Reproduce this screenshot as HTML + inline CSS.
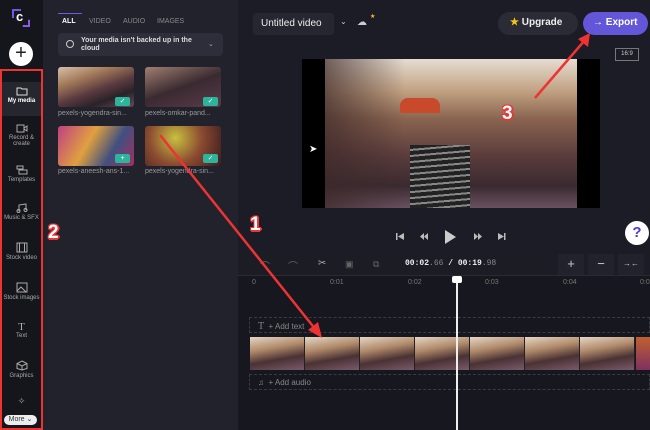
<!DOCTYPE html>
<html><head><style>
*{margin:0;padding:0;box-sizing:border-box}
body{width:650px;height:430px;overflow:hidden;background:#1c1c26;font-family:"Liberation Sans",sans-serif;color:#ddd;position:relative}
.a{position:absolute}
.photo{background:linear-gradient(160deg,#d8c0a8 0%,#a07858 30%,#5a3a40 55%,#2a2228 75%,#6a4a5a 100%)}
.side{left:0;top:0;width:43px;height:430px;background:#15151c}
.nav{left:0;width:43px;text-align:center;font-size:6px;color:#aaa}
.nav svg{display:block;margin:0 auto 2px}
.panel{left:43px;top:0;width:195px;height:430px;background:#22222c}
.thumb{width:76px;height:40px;border-radius:3px}
.cap{font-size:7px;color:#999}
.chk{width:15px;height:9px;background:#2cb59b;border-radius:2px;color:#fff;font-size:7px;text-align:center;line-height:9px}
.frame{width:55px;height:33px;top:0;background:linear-gradient(170deg,#e6d6c6 0%,#b08a6a 35%,#4a3234 65%,#7a5a6a 100%);border-right:1px solid #222}
.tick{font-size:7px;color:#777;top:279px}
.red{border:2px solid #e33}
.num{font-weight:bold;color:#fff;font-size:19px;text-shadow:-1px -1px 0 #e33,1px -1px 0 #e33,-1px 1px 0 #e33,1px 1px 0 #e33,0 2px 0 #e33,2px 0 0 #e33}
</style></head><body>
<div class="a side"></div>
<div class="a" style="left:12px;top:9px;width:18px;height:18px;border-top:2px solid #6b5ce7;border-left:2px solid #6b5ce7;clip-path:polygon(0 0,50% 0,50% 50%,0 50%)"></div>
<div class="a" style="left:12px;top:9px;width:18px;height:18px;border-bottom:2px solid #8a5be7;border-right:2px solid #8a5be7;clip-path:polygon(60% 60%,100% 60%,100% 100%,60% 100%)"></div>
<div class="a" style="left:16px;top:9px;font-size:13px;font-weight:bold;color:#fff">c</div>
<div class="a" style="left:9px;top:42px;width:24px;height:24px;border-radius:50%;background:#fff;color:#222;font-size:20px;text-align:center;line-height:23px">+</div>
<div class="a" style="left:0;top:82px;width:42px;height:34px;background:#26262f"></div>
<div class="a nav" style="top:86px;color:#fff;font-weight:bold"><svg width="12" height="10"><path d="M1 2h4l1 1h5v6H1z" fill="none" stroke="#ddd"/></svg>My media</div>
<div class="a nav" style="top:124px"><svg width="12" height="9"><rect x="1" y="1" width="7" height="7" fill="none" stroke="#aaa"/><path d="M8 4l3-2v5l-3-2" fill="none" stroke="#aaa"/></svg>Record &amp;<br>create</div>
<div class="a nav" style="top:165px"><svg width="12" height="10"><rect x="1" y="1" width="6" height="3" fill="none" stroke="#aaa"/><rect x="3" y="5" width="8" height="4" fill="none" stroke="#aaa"/></svg>Templates</div>
<div class="a nav" style="top:203px"><svg width="12" height="10"><path d="M3 8V2l7-1v6" fill="none" stroke="#aaa"/><circle cx="2.5" cy="8" r="1.5" fill="none" stroke="#aaa"/><circle cx="9.5" cy="7" r="1.5" fill="none" stroke="#aaa"/></svg>Music &amp; SFX</div>
<div class="a nav" style="top:242px"><svg width="12" height="11"><rect x="1" y="1" width="10" height="9" fill="none" stroke="#aaa"/><path d="M3.5 1v9M8.5 1v9" stroke="#aaa"/></svg>Stock video</div>
<div class="a nav" style="top:282px"><svg width="12" height="11"><rect x="1" y="1" width="10" height="9" fill="none" stroke="#aaa"/><path d="M1 9l4-4 5 5" fill="none" stroke="#aaa"/></svg>Stock images</div>
<div class="a nav" style="top:321px"><div style="font-family:'Liberation Serif',serif;font-size:11px;color:#aaa">T</div>Text</div>
<div class="a nav" style="top:360px"><svg width="12" height="11"><path d="M6 1l5 2.5v5L6 10 1 8.5v-5z M1 3.5l5 2.5 5-2.5M6 6v4" fill="none" stroke="#aaa"/></svg>Graphics</div>
<div class="a nav" style="top:396px;font-size:9px">✧</div>
<div class="a" style="left:4px;top:415px;width:33px;height:10px;background:#eee;border-radius:5px;color:#333;font-size:7px;text-align:center;line-height:10px">More ⌄</div>
<div class="a red" style="left:0;top:69px;width:43px;height:361px"></div>

<div class="a panel"></div>
<div class="a num" style="left:48px;top:222px">2</div>
<div class="a" style="left:58px;top:13px;width:24px;height:1px;background:#6b5ce7"></div>
<div class="a" style="left:62px;top:18px;font-size:7px;font-weight:bold;color:#fff">ALL</div>
<div class="a" style="left:89px;top:18px;font-size:7px;color:#888">VIDEO</div>
<div class="a" style="left:123px;top:18px;font-size:7px;color:#888">AUDIO</div>
<div class="a" style="left:157px;top:18px;font-size:7px;color:#888">IMAGES</div>
<div class="a" style="left:58px;top:33px;width:165px;height:23px;background:#2e2e3a;border-radius:4px"></div>
<div class="a" style="left:66px;top:40px;width:8px;height:8px;border:1px solid #ccc;border-radius:50%"></div>
<div class="a" style="left:81px;top:37px;font-size:7px;font-weight:bold;color:#ddd;line-height:8px">Your media isn't backed up in the<br>cloud</div>
<div class="a" style="left:208px;top:40px;font-size:7px;color:#aaa">⌄</div>

<div class="a thumb photo" style="left:58px;top:67px"></div>
<div class="a chk" style="left:115px;top:97px">✓</div>
<div class="a cap" style="left:58px;top:110px">pexels-yogendra-sin...</div>
<div class="a thumb" style="left:145px;top:67px;background:linear-gradient(160deg,#a08070,#3a2a30 50%,#5a3a4a)"></div>
<div class="a chk" style="left:203px;top:97px">✓</div>
<div class="a cap" style="left:145px;top:110px">pexels-omkar-pand...</div>
<div class="a thumb" style="left:58px;top:126px;background:linear-gradient(120deg,#c04080,#e0a040 40%,#405080 70%,#a03060)"></div>
<div class="a chk" style="left:115px;top:154px">+</div>
<div class="a cap" style="left:58px;top:168px">pexels-aneesh-ans-1...</div>
<div class="a thumb" style="left:145px;top:126px;background:radial-gradient(circle at 40% 30%,#c8c040,#8a4a30 50%,#3a1a20)"></div>
<div class="a chk" style="left:203px;top:154px">✓</div>
<div class="a cap" style="left:145px;top:168px">pexels-yogendra-sin...</div>

<div class="a" style="left:253px;top:13px;width:81px;height:22px;background:#262630;border-radius:3px;font-size:10px;color:#eee;padding:5px 8px">Untitled video</div>
<div class="a" style="left:340px;top:17px;font-size:8px;color:#ccc">⌄</div>
<div class="a" style="left:357px;top:17px;font-size:10px;color:#ccc">☁</div>
<div class="a" style="left:370px;top:13px;font-size:6px;color:#f5c518">★</div>
<div class="a" style="left:498px;top:12px;width:80px;height:23px;background:#2b2b36;border-radius:12px;font-size:10px;font-weight:bold;color:#eee;padding:5px 0 0 12px"><span style="color:#f5c518">★</span> Upgrade</div>
<div class="a" style="left:583px;top:12px;width:65px;height:23px;background:#6456d8;border-radius:12px;font-size:10px;font-weight:bold;color:#fff;padding:5px 0 0 10px">→ Export</div>
<div class="a" style="left:615px;top:48px;width:24px;height:13px;border:1px solid #777;font-size:6px;color:#ccc;text-align:center;line-height:11px">16:9</div>

<div class="a" style="left:302px;top:59px;width:298px;height:149px;background:#000"></div>
<div class="a" style="left:325px;top:59px;width:252px;height:149px;background:linear-gradient(180deg,#e6dcd2 0%,#c0a080 22%,#8a6450 40%,#5a3c3c 65%,#3a2a30 85%,#6a5060 100%)"></div>
<div class="a" style="left:325px;top:59px;width:80px;height:149px;background:linear-gradient(90deg,rgba(60,40,40,.7),rgba(0,0,0,0))"></div>
<div class="a" style="left:400px;top:98px;width:40px;height:15px;background:#c84a2a;border-radius:8px 8px 2px 2px"></div>
<div class="a" style="left:410px;top:145px;width:60px;height:63px;background:repeating-linear-gradient(175deg,#222 0 4px,#888 4px 6px)"></div>
<div class="a" style="left:309px;top:144px;font-size:10px;color:#fff">➤</div>
<div class="a num" style="left:502px;top:103px">3</div>

<svg class="a" style="left:390px;top:228px" width="120" height="18">
<g fill="#bbb"><rect x="6" y="5" width="1.5" height="7"/><path d="M14 5v7l-6-3.5z"/>
<path d="M38 5v7l-4-3.5zM34 5v7l-4-3.5z"/>
<path d="M55 2v14l11-7z" fill="#ccc"/>
<path d="M84 5v7l4-3.5zM88 5v7l4-3.5z"/>
<path d="M108 5v7l6-3.5z"/><rect x="114" y="5" width="1.5" height="7"/></g></svg>
<div class="a" style="left:625px;top:221px;width:24px;height:24px;border-radius:50%;background:#fff;color:#4a3ad8;font-weight:bold;font-size:15px;text-align:center;line-height:24px">?</div>
<div class="a num" style="left:250px;top:214px">1</div>

<div class="a" style="left:238px;top:254px;width:412px;height:176px;background:#17171f"></div>
<div class="a" style="left:238px;top:254px;width:412px;height:21px;background:#1c1c25"></div>
<div class="a" style="left:260px;top:258px;font-size:10px;color:#666;letter-spacing:18px">⌒⌒</div>
<div class="a" style="left:318px;top:258px;font-size:10px;color:#aaa">✂</div>
<div class="a" style="left:345px;top:259px;font-size:9px;color:#666">▣</div>
<div class="a" style="left:373px;top:259px;font-size:9px;color:#666">⧉</div>
<div class="a" style="left:405px;top:259px;font-size:8px;font-family:'Liberation Mono',monospace;color:#eee;font-weight:bold">00:02<span style="color:#888;font-weight:normal">.66</span> / 00:19<span style="color:#888;font-weight:normal">.98</span></div>
<div class="a" style="left:558px;top:254px;width:26px;height:21px;background:#22222c;color:#ccc;font-size:13px;text-align:center;line-height:20px">+</div>
<div class="a" style="left:588px;top:254px;width:26px;height:21px;background:#22222c;color:#ccc;font-size:13px;text-align:center;line-height:20px">−</div>
<div class="a" style="left:618px;top:254px;width:26px;height:21px;background:#22222c;color:#ccc;font-size:8px;text-align:center;line-height:20px">→←</div>
<div class="a" style="left:238px;top:275px;width:412px;height:1px;background:#2a2a34"></div>
<div class="a tick" style="left:252px">0</div>
<div class="a tick" style="left:330px">0:01</div>
<div class="a tick" style="left:408px">0:02</div>
<div class="a tick" style="left:485px">0:03</div>
<div class="a tick" style="left:563px">0:04</div>
<div class="a tick" style="left:640px">0:0</div>
<div class="a" style="left:249px;top:317px;width:401px;height:16px;border:1px dashed #3a3a44;font-size:8px;color:#888;padding:3px 8px"><span style="font-family:'Liberation Serif',serif;font-size:10px">T</span> &nbsp;+ Add text</div>
<div class="a" style="left:250px;top:337px;width:400px;height:33px;overflow:hidden">
<div class="a frame" style="left:0"></div><div class="a frame" style="left:55px"></div><div class="a frame" style="left:110px"></div><div class="a frame" style="left:165px"></div><div class="a frame" style="left:220px"></div><div class="a frame" style="left:275px"></div><div class="a frame" style="left:330px"></div><div class="a" style="left:386px;top:0;width:14px;height:33px;background:linear-gradient(#c06030,#803060)"></div>
</div>
<div class="a" style="left:249px;top:374px;width:401px;height:16px;border:1px dashed #3a3a44;font-size:8px;color:#888;padding:3px 8px">♫ &nbsp;+ Add audio</div>
<div class="a" style="left:456px;top:276px;width:2px;height:154px;background:#eee"></div>
<div class="a" style="left:452px;top:276px;width:10px;height:7px;background:#fff;border-radius:2px"></div>

<svg class="a" style="left:0;top:0" width="650" height="430">
<g stroke="#e33" stroke-width="2.5" fill="#e33">
<line x1="160" y1="135" x2="316" y2="330"/><polygon points="322,338 308,330 318,322" stroke="none"/>
<line x1="535" y1="98" x2="585" y2="40"/><polygon points="590,33 588,47 578,39" stroke="none"/>
</g></svg>
</body></html>
